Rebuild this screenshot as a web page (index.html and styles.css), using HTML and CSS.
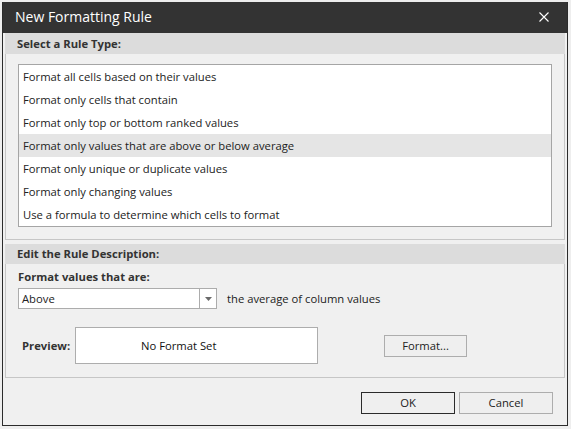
FILE: index.html
```html
<!DOCTYPE html>
<html>
<head>
<meta charset="utf-8">
<link rel="stylesheet" href="styles.css">
</head>
<body>
<div class="dialog">
  <div class="titlebar">
    <span class="title">New Formatting Rule</span>
    <svg class="close" width="10" height="10" viewBox="0 0 10 10"><path d="M0.5 0.5L9.5 9.5M9.5 0.5L0.5 9.5" stroke="#ffffff" stroke-width="1.1" fill="none"/></svg>
  </div>
  <div class="client">
    <section class="group">
      <div class="band band-first">Select a Rule Type:</div>
      <div class="gbody gbody-list">
        <ul class="listbox">
          <li>Format all cells based on their values</li>
          <li>Format only cells that contain</li>
          <li>Format only top or bottom ranked values</li>
          <li class="selected">Format only values that are above or below average</li>
          <li>Format only unique or duplicate values</li>
          <li>Format only changing values</li>
          <li>Use a formula to determine which cells to format</li>
        </ul>
      </div>
    </section>
    <section class="group group-second">
      <div class="band">Edit the Rule Description:</div>
      <div class="gbody gbody-desc">
        <div class="label">Format values that are:</div>
        <div class="row">
          <div class="combo">
            <span class="combo-value">Above</span>
            <span class="combo-arrow"><svg width="7" height="4" viewBox="0 0 7 4"><path d="M0 0H7L3.5 4Z" fill="#6a6a6a"/></svg></span>
          </div>
          <span class="tail">the average of column values</span>
        </div>
        <div class="prow">
          <span class="plabel">Preview:</span>
          <div class="pbox">No Format Set</div>
          <button class="btn btn-format">Format...</button>
        </div>
      </div>
    </section>
    <div class="footer">
      <button class="btn btn-ok">OK</button>
      <button class="btn btn-cancel">Cancel</button>
    </div>
  </div>
</div>
</body>
</html>
```

FILE: styles.css
```css
html, body {
  margin: 0;
  padding: 0;
}
body {
  background: #eeeeee;
  font-family: "Open Sans", "Noto Sans", sans-serif;
  font-size: 11.25px;
  color: #222222;
  padding: 2px 0 0 2px;
  width: 571px;
  height: 429px;
  box-sizing: border-box;
  overflow: hidden;
}
.dialog {
  width: 566px;
  height: 424px;
  box-sizing: border-box;
  border: 1px solid #2b2b2b;
  border-top: none;
  background: #f0f0f0;
  display: flex;
  flex-direction: column;
}
.titlebar {
  height: 31px;
  flex: none;
  background: #333333;
  display: flex;
  align-items: center;
  justify-content: space-between;
  padding: 0 18px 0 12px;
}
.title {
  color: #ffffff;
  font-size: 14px;
  line-height: 18px;
  margin-top: -1px;
}
.close {
  display: block;
  margin-top: -1px;
}
.client {
  flex: 1;
  padding: 0 2px;
  display: flex;
  flex-direction: column;
}
.group-second {
  margin-top: 4px;
}
.band {
  background: #dcdcdc;
  font-weight: 700;
  color: #333333;
  height: 20px;
  line-height: 20px;
  padding-left: 12px;
}
.band-first {
  height: 21px;
  line-height: 21px;
  padding-top: 0;
}
.band-first {
  box-sizing: border-box;
  padding-top: 1px;
  line-height: 20px;
}
.gbody {
  border: 1px solid #c6c6c6;
  border-top: none;
}
.gbody-list {
  padding: 10px 12px 12px 12px;
}
.listbox {
  list-style: none;
  margin: 0;
  padding: 0;
  background: #ffffff;
  border: 1px solid #a5a5a5;
  height: 163px;
  box-sizing: border-box;
}
.listbox li {
  height: 23px;
  line-height: 23px;
  padding-left: 4px;
  white-space: nowrap;
}
.listbox li.selected {
  background: #e5e5e5;
}
.gbody-desc {
  padding: 5px 12px 13px 12px;
}
.label {
  font-weight: 700;
  color: #333333;
  line-height: 16px;
  margin-bottom: 3px;
}
.row {
  display: flex;
  align-items: center;
}
.combo {
  width: 199px;
  height: 21px;
  box-sizing: border-box;
  border: 1px solid #acacac;
  background: #ffffff;
  display: flex;
  align-items: stretch;
}
.combo-value {
  flex: 1;
  padding-left: 3px;
  line-height: 19px;
}
.combo-arrow {
  width: 16px;
  border-left: 1px solid #acacac;
  display: flex;
  align-items: center;
  justify-content: center;
}
.combo-arrow svg {
  display: block;
  margin-left: 1px;
}
.tail {
  margin-left: 10px;
  line-height: 19px;
}
.prow {
  display: flex;
  align-items: center;
  margin-top: 18px;
  padding-left: 4px;
}
.plabel {
  width: 53px;
  font-weight: 700;
  color: #333333;
}
.pbox {
  width: 243px;
  height: 37px;
  box-sizing: border-box;
  border: 1px solid #adadad;
  background: #ffffff;
  line-height: 35px;
  padding-left: 65px;
  color: #111111;
}
.btn {
  font-family: "Open Sans", "Noto Sans", sans-serif;
  font-size: 11.25px;
  color: #222222;
  background: #efefef;
  border: 1px solid #adadad;
  height: 22px;
  box-sizing: border-box;
  padding: 0;
  margin: 0;
  line-height: 20px;
}
.btn-format {
  width: 83px;
  margin-left: 66px;
}
.footer {
  display: flex;
  justify-content: flex-end;
  gap: 4px;
  padding: 14px 12px 0 0;
}
.btn-ok {
  width: 94px;
  border-color: #2b2b2b;
}
.btn-cancel {
  width: 94px;
}
```
